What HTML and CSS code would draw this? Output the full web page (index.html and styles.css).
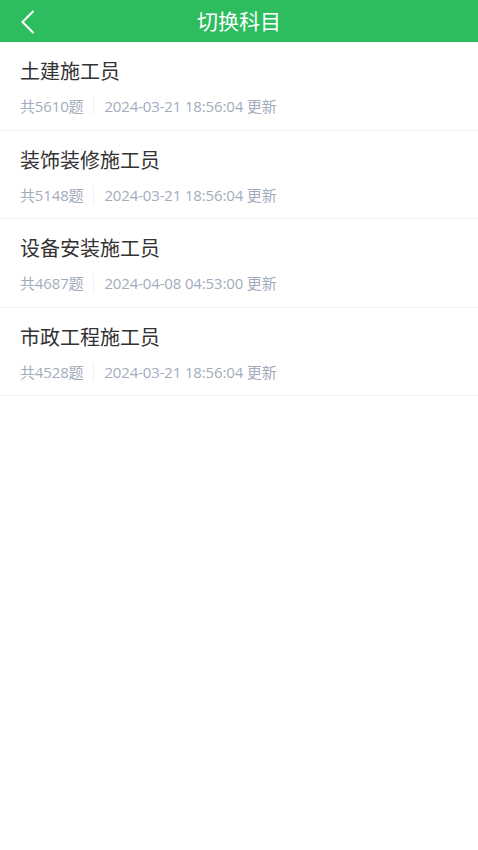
FILE: index.html
```html
<!DOCTYPE html>
<html lang="zh">
<head>
<meta charset="utf-8">
<title>切换科目</title>
<link rel="stylesheet" href="styles.css">
</head>
<body>
<header class="topbar">
  <span class="back">
    <svg width="16" height="24" viewBox="0 0 16 24"><polyline points="13.5,1 2.5,12 13.5,23" fill="none" stroke="#fff" stroke-width="2"/></svg>
  </span>
  <h1 class="title">切换科目</h1>
</header>
<ul class="list">
  <li class="item">
    <div class="name">土建施工员</div>
    <div class="meta"><span class="count">共5610题</span><span class="sep"></span><span class="date">2024-03-21 18:56:04 更新</span></div>
  </li>
  <li class="item">
    <div class="name">装饰装修施工员</div>
    <div class="meta"><span class="count">共5148题</span><span class="sep"></span><span class="date">2024-03-21 18:56:04 更新</span></div>
  </li>
  <li class="item">
    <div class="name">设备安装施工员</div>
    <div class="meta"><span class="count">共4687题</span><span class="sep"></span><span class="date">2024-04-08 04:53:00 更新</span></div>
  </li>
  <li class="item">
    <div class="name">市政工程施工员</div>
    <div class="meta"><span class="count">共4528题</span><span class="sep"></span><span class="date">2024-03-21 18:56:04 更新</span></div>
  </li>
</ul>
</body>
</html>
```
FILE: styles.css
```css
html, body {
  margin: 0;
  padding: 0;
  background: #fff;
  font-family: "Open Sans", "Noto Sans CJK SC", sans-serif;
}
.topbar {
  height: 42px;
  background: #2dbd5f;
  display: flex;
  align-items: center;
  justify-content: center;
  position: relative;
}
.back {
  position: absolute;
  left: 20px;
  top: 10px;
  width: 16px;
  height: 24px;
  display: flex;
}
.title {
  margin: 0;
  color: #fff;
  font-size: 21px;
  font-weight: normal;
  line-height: 42px;
}
.list {
  list-style: none;
  margin: 0;
  padding: 0;
}
.item {
  box-sizing: border-box;
  height: 88.5px;
  padding: 16px 20px 0;
  border-bottom: 1px solid #f1f1f1;
}
.name {
  font-size: 20px;
  color: #333;
  line-height: 28px;
}
.meta {
  margin-top: 10px;
  display: flex;
  align-items: center;
  font-size: 15px;
  color: #a3acbc;
  line-height: 20px;
  letter-spacing: -0.15px;
}
.sep {
  width: 1px;
  height: 18px;
  background: #eef0f3;
  margin: 0 10px;
}
```
